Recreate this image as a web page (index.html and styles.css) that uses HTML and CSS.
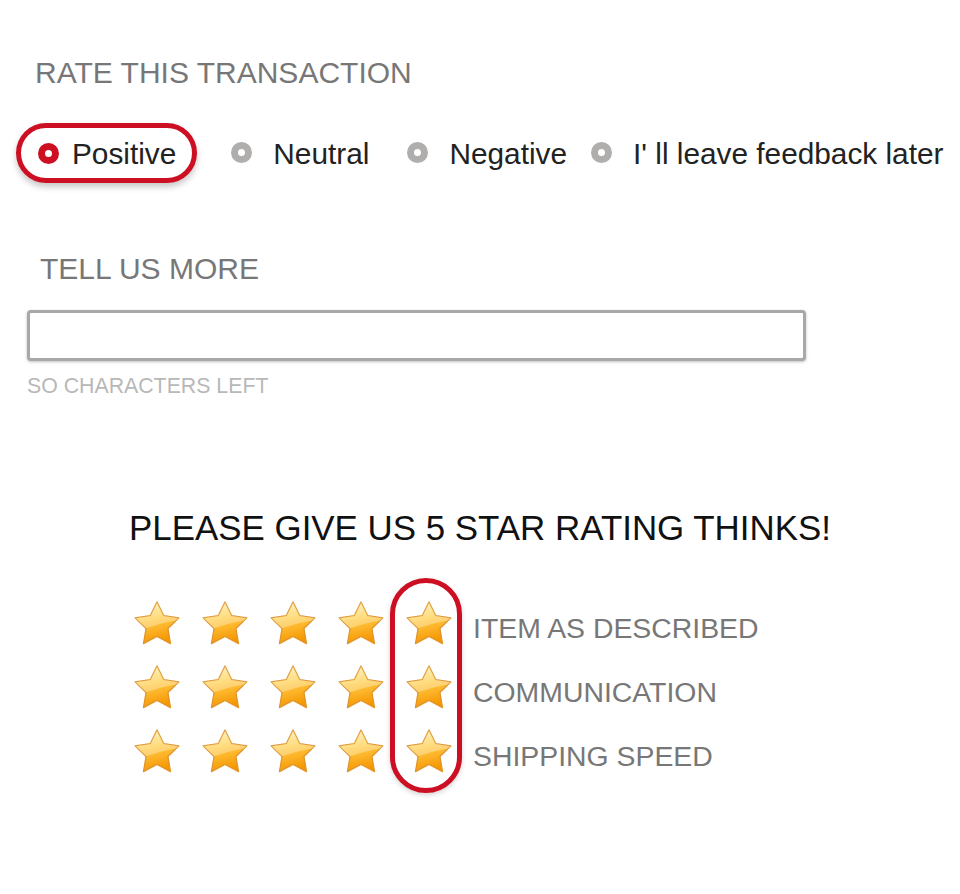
FILE: index.html
```html
<!DOCTYPE html>
<html lang="en">
<head>
    <meta charset="UTF-8">
    <title>Leave Feedback</title>
    <link rel="stylesheet" href="styles.css">
</head>
<body>
    <svg class="svg-defs" width="0" height="0" aria-hidden="true">
        <defs>
            <linearGradient id="starFill" x1="0.2" y1="0" x2="0.45" y2="1">
                <stop offset="0" stop-color="#fff1b0"/>
                <stop offset="0.4" stop-color="#ffcf4a"/>
                <stop offset="0.65" stop-color="#fdb52a"/>
                <stop offset="1" stop-color="#f39500"/>
            </linearGradient>
            <path id="starShape" d="M24 2 L30.76 15.7 L45.87 17.89 L34.94 28.55 L37.52 43.61 L24 36.5 L10.48 43.61 L13.06 28.55 L2.13 17.89 L17.24 15.7 Z"/>
            <clipPath id="starClip">
                <use href="#starShape"/>
            </clipPath>
            <symbol id="star" viewBox="0 0 48 46">
                <use href="#starShape" fill="url(#starFill)" stroke="#e0952a" stroke-width="1.3" stroke-linejoin="round"/>
                <path d="M0 0 H48 V20 Q28 22 0 33 Z" fill="#fff" opacity="0.3" clip-path="url(#starClip)"/>
            </symbol>
        </defs>
    </svg>

    <div class="feedback">
        <h2 class="section-title">RATE THIS TRANSACTION</h2>

        <div class="rate-options">
            <label class="option option-selected">
                <span class="radio radio-on"></span>
                <span class="option-text">Positive</span>
            </label>
            <label class="option">
                <span class="radio"></span>
                <span class="option-text">Neutral</span>
            </label>
            <label class="option option-wide">
                <span class="radio"></span>
                <span class="option-text">Negative</span>
            </label>
            <label class="option option-last">
                <span class="radio"></span>
                <span class="option-text">I' ll leave feedback later</span>
            </label>
        </div>

        <h2 class="section-title section-more">TELL US MORE</h2>
        <input class="comment-box" type="text">
        <p class="chars-left">SO CHARACTERS LEFT</p>

        <h3 class="star-title">PLEASE GIVE US 5 STAR RATING THINKS!</h3>

        <div class="ratings">
            <div class="rating-row">
                <svg class="star"><use href="#star"/></svg>
                <svg class="star"><use href="#star"/></svg>
                <svg class="star"><use href="#star"/></svg>
                <svg class="star"><use href="#star"/></svg>
                <svg class="star"><use href="#star"/></svg>
                <span class="rating-label">ITEM AS DESCRIBED</span>
            </div>
            <div class="rating-row">
                <svg class="star"><use href="#star"/></svg>
                <svg class="star"><use href="#star"/></svg>
                <svg class="star"><use href="#star"/></svg>
                <svg class="star"><use href="#star"/></svg>
                <svg class="star"><use href="#star"/></svg>
                <span class="rating-label">COMMUNICATION</span>
            </div>
            <div class="rating-row">
                <svg class="star"><use href="#star"/></svg>
                <svg class="star"><use href="#star"/></svg>
                <svg class="star"><use href="#star"/></svg>
                <svg class="star"><use href="#star"/></svg>
                <svg class="star"><use href="#star"/></svg>
                <span class="rating-label">SHIPPING SPEED</span>
            </div>
            <div class="five-star-mark"></div>
        </div>
    </div>
</body>
</html>
```

FILE: styles.css
```css
/* General Reset */
* {
    margin: 0;
    padding: 0;
    box-sizing: border-box;
}

body {
    font-family: 'Liberation Sans', Arial, sans-serif;
    background-color: white;
    color: #222;
}

.svg-defs {
    position: absolute;
    width: 0;
    height: 0;
}

.feedback {
    padding-bottom: 80px;
}

.section-title {
    font-size: 30px;
    font-weight: normal;
    line-height: 1;
    color: #777;
    margin: 58px 0 0 35px;
}

.rate-options {
    display: flex;
    align-items: center;
    margin: 35px 0 0 16px;
}

.option {
    display: flex;
    align-items: center;
    gap: 21px;
    margin-left: 34px;
    font-size: 29.8px;
    line-height: 1;
    color: #222;
}

.option-wide {
    margin-left: 38px;
}

.option-last {
    margin-left: 24px;
}

.option-text {
    padding-top: 2px;
}

.option-selected {
    margin-left: 0;
    gap: 13px;
    height: 60px;
    padding: 0 16px 0 17px;
    border: 5px solid #cc0f22;
    border-radius: 30px;
    box-shadow: 0 4px 6px rgba(0, 0, 0, 0.22);
}

.radio {
    width: 21px;
    height: 21px;
    border-radius: 50%;
    border: 7px solid #b0adad;
    background-color: white;
}

.radio-on {
    border-color: #cc0f22;
}

.section-more {
    margin: 71px 0 0 40px;
}

.comment-box {
    display: block;
    width: 779px;
    height: 51px;
    margin: 26px 0 0 27px;
    border: 3px solid #a8a8a8;
    border-radius: 4px;
    box-shadow: 0 1px 3px rgba(0, 0, 0, 0.25);
    background-color: white;
}

.chars-left {
    font-size: 21.3px;
    line-height: 1;
    color: #b8b8b8;
    margin: 15px 0 0 27px;
}

.star-title {
    font-size: 34.9px;
    font-weight: normal;
    line-height: 1;
    color: #111;
    text-align: center;
    margin-top: 114px;
}

.ratings {
    position: relative;
    margin-top: 45px;
    padding-left: 133px;
}

.rating-row {
    display: flex;
    align-items: center;
    gap: 20px;
    height: 64px;
}

.star {
    width: 48px;
    height: 46px;
}

.rating-label {
    font-size: 28.4px;
    line-height: 1;
    color: #777;
    padding-top: 10px;
}

.five-star-mark {
    position: absolute;
    left: 390px;
    top: -13px;
    width: 72px;
    height: 215px;
    border: 5px solid #cc0f22;
    border-radius: 36px;
    box-shadow: 0 2px 5px rgba(0, 0, 0, 0.18);
}
```
